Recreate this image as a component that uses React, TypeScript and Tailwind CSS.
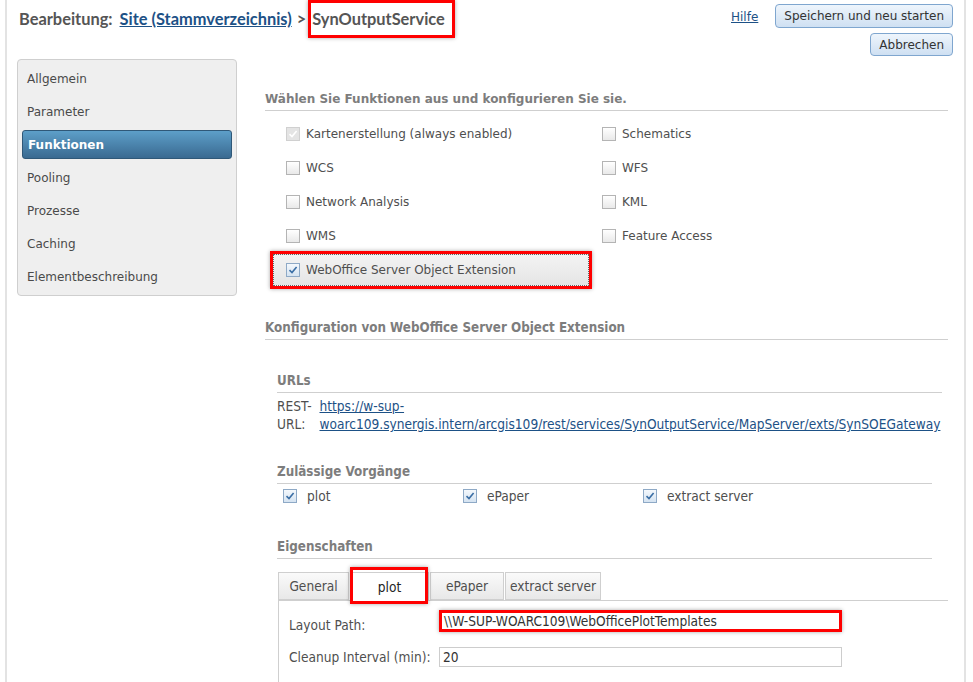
import type { ReactNode } from 'react';

const sans = { fontFamily: '"DejaVu Sans", Verdana, sans-serif' };
const narrow = { fontFamily: '"DejaVu Sans Condensed", "DejaVu Sans", sans-serif', fontStretch: 'condensed' as const };

const Box = ({ checked = false, disabled = false }: { checked?: boolean; disabled?: boolean }) => (
  <span
    className={
      'inline-flex w-[14px] h-[14px] shrink-0 items-center justify-center border ' +
      (disabled
        ? 'border-[#d0d0d0] bg-[#e4e4e4]'
        : checked
          ? 'border-[#8ea9c6] bg-gradient-to-b from-[#f4f8fc] to-[#d5e3f1]'
          : 'border-[#b4b4b4] bg-gradient-to-b from-[#ffffff] to-[#e9e9e9]')
    }
  >
    {checked && (
      <svg width="10" height="10" viewBox="0 0 10 10">
        <path
          d="M1.5 5.2 L4 7.6 L8.6 2"
          fill="none"
          stroke={disabled ? '#ffffff' : '#3a6ea5'}
          strokeWidth="1.6"
        />
      </svg>
    )}
  </span>
);

const SectionTitle = ({ children, className = '' }: { children: ReactNode; className?: string }) => (
  <div className={'border-b border-[#cfcfcf] pb-[3px] leading-[16px] font-bold text-[#7d7d7d] ' + className}>{children}</div>
);

const nav = ['Allgemein', 'Parameter', 'Funktionen', 'Pooling', 'Prozesse', 'Caching', 'Elementbeschreibung'];

const functions = [
  { label: 'Kartenerstellung (always enabled)', checked: true, disabled: true },
  { label: 'Schematics' },
  { label: 'WCS' },
  { label: 'WFS' },
  { label: 'Network Analysis' },
  { label: 'KML' },
  { label: 'WMS' },
  { label: 'Feature Access' },
  { label: 'WebOffice Server Object Extension', checked: true, marked: true },
];

const ops = ['plot', 'ePaper', 'extract server'];

const tabs = [
  { label: 'General', w: 'w-[71px]' },
  { label: 'plot', w: 'w-[79px]' },
  { label: 'ePaper', w: 'w-[74px]' },
  { label: 'extract server', w: 'w-[96px]' },
];

export default function App() {
  return (
    <div className="w-[973px] h-[682px] overflow-hidden bg-white text-[#4f4f4f]">
      <div className="ml-[5px] w-[961px] min-h-[682px] border-l-2 border-r-2 border-[#e3e3e3]">
        {/* header */}
        <div className="flex justify-between items-start pl-[12px] pr-[11px]">
          <div className="flex items-center h-[38px] text-[16.4px] font-bold text-[#555]" style={{ fontFamily: 'Lato, sans-serif' }}>
            <span>Bearbeitung:</span>
            <a className="ml-[7px] text-[#1d5186] underline">Site (Stammverzeichnis)</a>
            <span className="ml-[5px]">&gt;</span>
            <span className="ml-[2px] h-[38px] flex items-center border-[3px] border-[#f00] pl-[1px] pr-[7px] shadow-[0_0_4px_rgba(0,0,0,0.35)]">
              SynOutputService
            </span>
          </div>
          <div className="flex gap-[17px] pt-[4px] text-[12px]" style={sans}>
            <a className="mt-[4px] text-[#1d5186] underline">Hilfe</a>
            <div className="flex flex-col items-end gap-[5px]">
              <button className="h-[24px] px-[8px] rounded-[4px] border border-[#7fa6cf] bg-gradient-to-b from-[#eef5fc] to-[#cfe0f2] text-[#333]">
                Speichern und neu starten
              </button>
              <button className="h-[23px] px-[8px] rounded-[4px] border border-[#7fa6cf] bg-gradient-to-b from-[#eef5fc] to-[#cfe0f2] text-[#333]">
                Abbrechen
              </button>
            </div>
          </div>
        </div>

        <div className="flex items-start mt-[3px]">
          {/* side navigation */}
          <div className="ml-[10px] w-[220px] py-[2px] rounded-[4px] border border-[#cfcfcf] bg-[#efefef] text-[12px]" style={sans}>
            {nav.map((item) => (
              <div key={item} className="h-[33px] px-[4px] py-[2px]">
                <div
                  className={
                    'h-full flex items-center px-[5px] rounded-[3px] ' +
                    (item === 'Funktionen'
                      ? 'bg-gradient-to-b from-[#5d9fc9] to-[#3a6a91] border border-[#2f5878] text-white font-bold'
                      : 'text-[#4a4a4a]')
                  }
                >
                  {item}
                </div>
              </div>
            ))}
          </div>

          {/* main */}
          <div className="ml-[28px] w-[683px] pt-[32px]">
            <div className="text-[12px]" style={sans}>
              <SectionTitle>Wählen Sie Funktionen aus und konfigurieren Sie sie.</SectionTitle>
              <div className="grid grid-cols-[316px_1fr] mt-[6px] ml-[21px]">
                {functions.map((f) =>
                  f.marked ? (
                    <div
                      key={f.label}
                      className="h-[38px] -my-[2px] -ml-[16px] w-[322px] border-[3px] border-[#f00] shadow-[0_0_4px_rgba(0,0,0,0.35)]"
                    >
                      <div className="flex items-center gap-[6px] h-full pl-[12px] bg-gradient-to-b from-[#f3f3f3] to-[#e5e5e5] border border-dotted border-[#666]">
                        <Box checked />
                        <span>{f.label}</span>
                      </div>
                    </div>
                  ) : (
                    <div key={f.label} className="flex items-center gap-[6px] h-[34px]">
                      <Box checked={f.checked} disabled={f.disabled} />
                      <span>{f.label}</span>
                    </div>
                  )
                )}
              </div>
            </div>

            <div style={narrow}>
              <SectionTitle className="mt-[33px] text-[13.3px]">Konfiguration von WebOffice Server Object Extension</SectionTitle>

              <div className="ml-[12px] mr-[6px] mt-[33px] text-[13.6px]">
                <SectionTitle className="text-[13.3px]">URLs</SectionTitle>
                <div className="flex mt-[4px] leading-[18px]">
                  <span className="w-[43px]">REST-<br />URL:</span>
                  <a className="text-[#1d5186] underline w-[630px]">
                    https://w-sup-<br />woarc109.synergis.intern/arcgis109/rest/services/SynOutputService/MapServer/exts/SynSOEGateway
                  </a>
                </div>
              </div>

              <div className="ml-[12px] mr-[16px] mt-[31px] text-[13.6px]">
                <SectionTitle className="text-[13.3px]">Zulässige Vorgänge</SectionTitle>
                <div className="flex mt-[3px] pl-[6px]">
                  {ops.map((o) => (
                    <div key={o} className="flex items-center gap-[10px] h-[18px] w-[180px]">
                      <Box checked />
                      <span>{o}</span>
                    </div>
                  ))}
                </div>
              </div>

              <div className="ml-[12px] mr-[16px] mt-[34px]">
                <SectionTitle className="text-[13.3px]">Eigenschaften</SectionTitle>
              </div>

              <div className="ml-[13px] mt-[13px] text-[13.6px]">
                <div className="flex items-end gap-[1px]">
                  {tabs.map((t) =>
                    t.label === 'plot' ? (
                      <div key={t.label} className={'relative h-[29px] -mb-px bg-white border-x border-t border-[#cfcfcf] flex items-center justify-center text-[#222] ' + t.w}>
                        <span className="absolute -left-[1px] -top-[6px] w-[78px] h-[37px] border-[3px] border-[#f00] shadow-[0_0_4px_rgba(0,0,0,0.35)]" />
                        {t.label}
                      </div>
                    ) : (
                      <div key={t.label} className={'h-[28px] bg-gradient-to-b from-[#fafafa] to-[#e8e8e8] border border-[#cfcfcf] flex items-center justify-center ' + t.w}>
                        {t.label}
                      </div>
                    )
                  )}
                </div>
                <div className="border-l border-t border-[#cfcfcf] h-[90px] pl-[10px] pt-[9px]">
                  <div className="flex items-center h-[22px]">
                    <span className="w-[150px] mt-[8px]">Layout Path:</span>
                    <div className="w-[403px] h-[22px] border-[3px] border-[#f00] shadow-[0_0_4px_rgba(0,0,0,0.35)] flex items-center pl-[2px] text-[#333]">
                      \\W-SUP-WOARC109\WebOfficePlotTemplates
                    </div>
                  </div>
                  <div className="flex items-center h-[20px] mt-[15px]">
                    <span className="w-[150px]">Cleanup Interval (min):</span>
                    <div className="w-[403px] h-[20px] border border-[#cdcdcd] flex items-center pl-[3px] text-[#333]">20</div>
                  </div>
                </div>
              </div>
            </div>
          </div>
        </div>
      </div>
    </div>
  );
}
